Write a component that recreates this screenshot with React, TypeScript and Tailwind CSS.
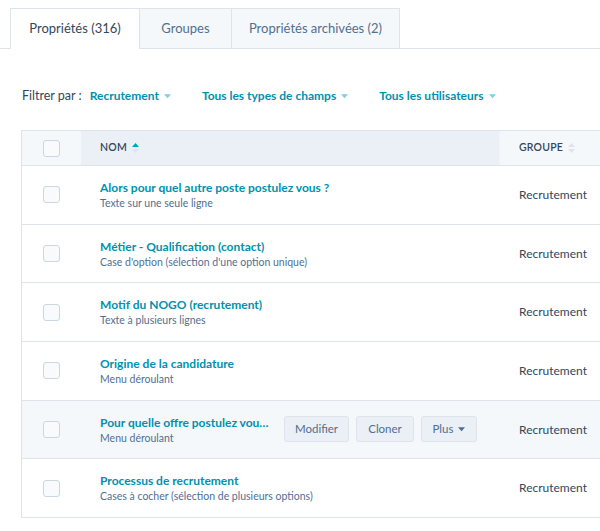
import React from "react";

const rows = [
  { t: "Alors pour quel autre poste postulez vous ?", s: "Texte sur une seule ligne" },
  { t: "Métier - Qualification (contact)", s: "Case d'option (sélection d'une option unique)" },
  { t: "Motif du NOGO (recrutement)", s: "Texte à plusieurs lignes" },
  { t: "Origine de la candidature", s: "Menu déroulant" },
  { t: "Pour quelle offre postulez vous ?", s: "Menu déroulant", hover: true },
  { t: "Processus de recrutement", s: "Cases à cocher (sélection de plusieurs options)" },
];

function Caret({ color = "#7fd1de" }: { color?: string }) {
  return (
    <svg width="7" height="5" viewBox="0 0 8 5" className="inline-block ml-[5px]">
      <path d="M0 0 L8 0 L4 4.5 Z" fill={color} />
    </svg>
  );
}

function Sort({ active }: { active?: boolean }) {
  return (
    <svg width="7" height="12" viewBox="0 0 7 12" className="ml-[5px]">
      <path d="M0 5 L3.5 1 L7 5 Z" fill={active ? "#00a4bd" : "#dfe3eb"} />
      <path d="M0 7 L3.5 11 L7 7 Z" fill="#dfe3eb" />
    </svg>
  );
}

function Box() {
  return <div className="w-[17px] h-[17px] rounded-[3px] border border-[#cbd6e2] bg-[#f9fafc]" />;
}

export default function App() {
  return (
    <div className="w-[600px] h-[531px] bg-white overflow-hidden text-[#33475b]" style={{ fontFamily: "Lato, 'Open Sans', sans-serif" }}>
      {/* Tabs */}
      <div className="pt-[8px] pl-[10px] flex border-b border-[#dfe3eb] h-[49px]">
        <div className="w-[129px] h-[41px] border-t border-l border-[#dfe3eb] bg-white flex items-center justify-center text-[13px] text-[#33475b] z-10">
          Propriétés (316)
        </div>
        <div className="w-[92px] h-[40px] border-t border-l border-[#dfe3eb] bg-[#f5f8fa] flex items-center justify-center text-[13px] text-[#516f90]">
          Groupes
        </div>
        <div className="w-[169px] h-[40px] border-t border-l border-r border-[#dfe3eb] bg-[#f5f8fa] flex items-center justify-center text-[13px] text-[#516f90]">
          Propriétés archivées (2)
        </div>
      </div>

      {/* Filters */}
      <div className="mt-[37px] ml-[22px] h-[20px] flex items-center text-[12px]">
        <span className="text-[#33475b] text-[12.5px]">Filtrer par :</span>
        <span className="ml-[8px] font-bold text-[#0091ae] flex items-center">Recrutement<Caret /></span>
        <span className="ml-[31px] font-bold text-[#0091ae] flex items-center">Tous les types de champs<Caret /></span>
        <span className="ml-[31px] font-bold text-[#0091ae] flex items-center">Tous les utilisateurs<Caret /></span>
      </div>

      {/* Table */}
      <div className="mt-[24px] ml-[21px] w-[640px] border border-[#dfe3eb]">
        <div className="flex h-[35px] border-b border-[#dfe3eb] text-[10.5px] font-semibold tracking-[0.2px]">
          <div className="w-[59px] bg-[#f5f8fa] flex items-center justify-center"><Box /></div>
          <div className="w-[418px] bg-[#eaf0f6] flex items-center pl-[19px]">NOM<Sort active /></div>
          <div className="flex-1 bg-[#f5f8fa] flex items-center pl-[19px] border-l border-[#f0f3f7]">GROUPE<Sort /></div>
        </div>
        {rows.map((r, i) => (
          <div key={i} className={`flex ${i < rows.length - 1 ? "border-b h-[58.7px]" : "h-[57.7px]"} border-[#dfe3eb] ${r.hover ? "bg-[#f5f8fa]" : "bg-white"}`}>
            <div className="w-[59px] flex items-center justify-center"><Box /></div>
            <div className="w-[418px] flex items-center pl-[19px]">
              <div className={`flex flex-col ${r.hover ? "w-[170px]" : ""}`}>
                <span className="text-[12px] font-bold text-[#0091ae] leading-[16px] truncate">{r.t}</span>
                <span className="text-[10.5px] text-[#516f90] leading-[14px]">{r.s}</span>
              </div>
              {r.hover && (
                <div className="flex gap-[7px] ml-[14px] mt-[-1px]">
                  <button className="w-[65px] h-[26px] rounded-[3px] border border-[#dfe3eb] bg-[#eaf0f6] text-[11.5px] text-[#506e91]">Modifier</button>
                  <button className="w-[58px] h-[26px] rounded-[3px] border border-[#dfe3eb] bg-[#eaf0f6] text-[11.5px] text-[#506e91]">Cloner</button>
                  <button className="w-[56px] h-[26px] rounded-[3px] border border-[#dfe3eb] bg-[#eaf0f6] text-[11.5px] text-[#506e91] flex items-center justify-center">Plus<Caret color="#506e91" /></button>
                </div>
              )}
            </div>
            <div className="flex-1 flex items-center pl-[20px] text-[12px] text-[#33475b]">Recrutement</div>
          </div>
        ))}
      </div>
    </div>
  );
}
